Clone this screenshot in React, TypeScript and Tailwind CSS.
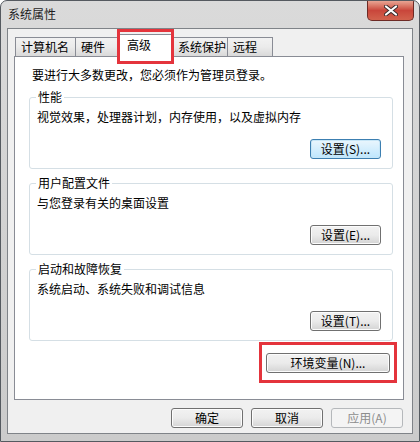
const font = "font-['Noto_Sans_CJK_SC','Noto_Sans',sans-serif]";

const tabs = [
  { label: '计算机名', w: 'w-[61px]' },
  { label: '硬件', w: 'w-[45px]' },
  { label: '高级', w: 'w-[54px]', active: true },
  { label: '系统保护', w: 'w-[56px]' },
  { label: '远程', w: 'w-[46px]' },
];

const Btn = ({ children, w = 'w-[71px]', focus = false, disabled = false }: { children: React.ReactNode; w?: string; focus?: boolean; disabled?: boolean }) => (
  <div
    className={`${w} h-[20px] flex items-center justify-center rounded-[3px] border text-[12px] leading-none ${
      disabled
        ? 'border-[#b5b8bb] bg-[#f4f4f4] text-[#8d8d8d]'
        : focus
        ? 'border-[#3c7fb1] bg-gradient-to-b from-[#eaf6fd] to-[#bee6fd] text-black shadow-[inset_0_0_0_1px_#c7e6f7]'
        : 'border-[#707070] bg-gradient-to-b from-[#f2f2f2] via-[#ebebeb] to-[#d4d4d4] text-black shadow-[inset_0_0_0_1px_#fcfcfc]'
    }`}
  >
    {children}
  </div>
);

const Group = ({ title, desc, btn, focus = false }: { title: string; desc: string; btn: string; focus?: boolean }) => (
  <div className="relative h-[72px] rounded-[3px] border border-[#d5dfe5] shadow-[inset_1px_1px_0_#fff] flex flex-col">
    <span className="absolute left-[6px] top-[-9px] bg-white px-[2px] text-[12px] leading-[16px]">{title}</span>
    <p className="ml-[7px] mt-[11px] text-[12px] leading-[16px]">{desc}</p>
    <div className="mt-auto mb-[9px] mr-[11px] flex justify-end">
      <Btn focus={focus}>{btn}</Btn>
    </div>
  </div>
);

export default function App() {
  return (
    <div className={`${font} w-[420px] h-[442px] flex flex-col rounded-t-[7px] border border-[#555a60] bg-gradient-to-b from-[#dadada] via-[#d2d2d2] to-[#cbcbcb] text-black overflow-hidden`}>
      {/* title bar */}
      <div className="h-[27px] flex items-start shrink-0">
        <span className="ml-[7px] mt-[5px] text-[12px] leading-[16px] text-[#1e1e1e]">系统属性</span>
        <div className="ml-auto mr-[5px] w-[47px] h-[20px] rounded-b-[5px] border border-t-0 border-[#6d2a25] bg-gradient-to-b from-[#e8a493] via-[#c9463b] to-[#d2624d] flex items-center justify-center">
          <svg width="14" height="11" viewBox="0 0 14 11">
            <path d="M2 1.5 L12 9.5 M12 1.5 L2 9.5" stroke="#3a2b2b" strokeWidth="4" strokeLinecap="round" />
            <path d="M2 1.5 L12 9.5 M12 1.5 L2 9.5" stroke="#ffffff" strokeWidth="2.2" strokeLinecap="round" />
          </svg>
        </div>
      </div>

      {/* client area */}
      <div className="mx-[6px] h-[406px] border border-[#7f8388] bg-[#f0f0f0] flex flex-col">
        {/* tabs */}
        <div className="ml-[7px] mt-[5px] flex items-end h-[22px] relative z-10">
          {tabs.map((t, i) =>
            t.active ? (
              <div key={t.label} className={`${t.w} relative -ml-px h-[23px] -mb-px border border-b-0 border-[#898c95] bg-white pl-[7px] pt-[2px] text-[12px] leading-[16px]`}>
                {t.label}
                <div className="absolute left-[-3px] right-[-2px] top-[-6px] bottom-[-7px] border-[3px] border-[#e4343c]" />
              </div>
            ) : (
              <div
                key={t.label}
                className={`${t.w} ${i === 0 ? '' : '-ml-px'} h-[19px] border border-b-0 border-[#898c95] bg-gradient-to-b from-[#f2f2f2] via-[#ebebeb] to-[#d9d9d9] pl-[5px] pt-[1px] text-[12px] leading-[16px]`}
              >
                {t.label}
              </div>
            )
          )}
        </div>

        {/* tab panel */}
        <div className="ml-[6px] w-[390px] h-[344px] border border-[#898c95] bg-white flex flex-col px-[14px] pr-[10px]">
          <p className="ml-[3px] mt-[10px] h-[16px] text-[12px] leading-[16px]">要进行大多数更改，您必须作为管理员登录。</p>
          <div className="mt-[14px] flex flex-col gap-[14px]">
            <Group title="性能" desc="视觉效果，处理器计划，内存使用，以及虚拟内存" btn="设置(S)..." focus />
            <Group title="用户配置文件" desc="与您登录有关的桌面设置" btn="设置(E)..." />
            <Group title="启动和故障恢复" desc="系统启动、系统失败和调试信息" btn="设置(T)..." />
          </div>
          <div className="mt-[12px] mr-[2px] flex justify-end">
            <div className="relative mr-[1px]">
              <Btn w="w-[124px]">环境变量(N)...</Btn>
              <div className="absolute left-[-7px] right-[-7px] top-[-11px] bottom-[-10px] border-[3px] border-[#e4343c]" />
            </div>
          </div>
        </div>

        {/* dialog buttons */}
        <div className="mt-[8px] ml-[163px] flex gap-[8px]">
          <Btn w="w-[72px]">确定</Btn>
          <Btn w="w-[72px]">取消</Btn>
          <Btn w="w-[72px]" disabled>应用(A)</Btn>
        </div>
      </div>
    </div>
  );
}
